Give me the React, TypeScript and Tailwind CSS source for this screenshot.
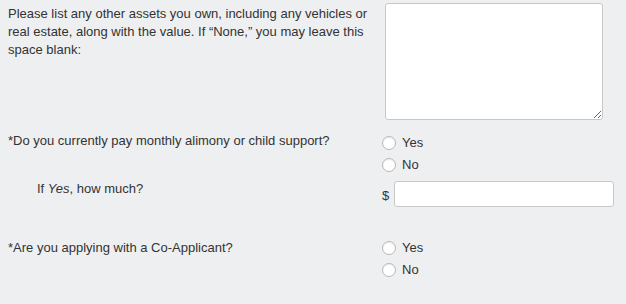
import React from "react";

function Radio({ label }: { label: string }) {
  return (
    <label className="flex items-center h-[22px] gap-[6px]">
      <span className="w-[14px] h-[14px] rounded-full border border-[#b8b8b8] bg-white shadow-[inset_0_1px_1px_rgba(0,0,0,0.08)]" />
      <span>{label}</span>
    </label>
  );
}

export default function App() {
  return (
    <div
      className="w-[626px] h-[304px] bg-[#eeeff1] text-[#333] text-[13px] leading-[18px] overflow-hidden"
      style={{ fontFamily: '"Liberation Sans", Arial, sans-serif' }}
    >
      <div className="flex pt-[3px]">
        <div className="w-[382px] pl-2 pr-1 pt-[2px]">
          Please list any other assets you own, including any vehicles or real estate, along with the value. If “None,” you may leave this space blank:
        </div>
        <textarea className="ml-[3px] w-[218px] h-[117px] bg-white border border-[#c8c8c8] rounded-[3px] resize" />
      </div>

      <div className="flex mt-[12px]">
        <div className="w-[382px] pl-2">*Do you currently pay monthly alimony or child support?</div>
        <div className="flex flex-col">
          <Radio label="Yes" />
          <Radio label="No" />
        </div>
      </div>

      <div className="flex mt-[4px]">
        <div className="w-[382px] pl-[37px]">
          If <i>Yes</i>, how much?
        </div>
        <div className="flex items-center gap-[5px] mt-[1px]">
          <span className="pt-[4px]">$</span>
          <input className="w-[220px] h-[26px] bg-white border border-[#c8c8c8] rounded-[3px]" />
        </div>
      </div>

      <div className="flex mt-[30px]">
        <div className="w-[382px] pl-2 pt-[2px]">*Are you applying with a Co-Applicant?</div>
        <div className="flex flex-col">
          <Radio label="Yes" />
          <Radio label="No" />
        </div>
      </div>
    </div>
  );
}
